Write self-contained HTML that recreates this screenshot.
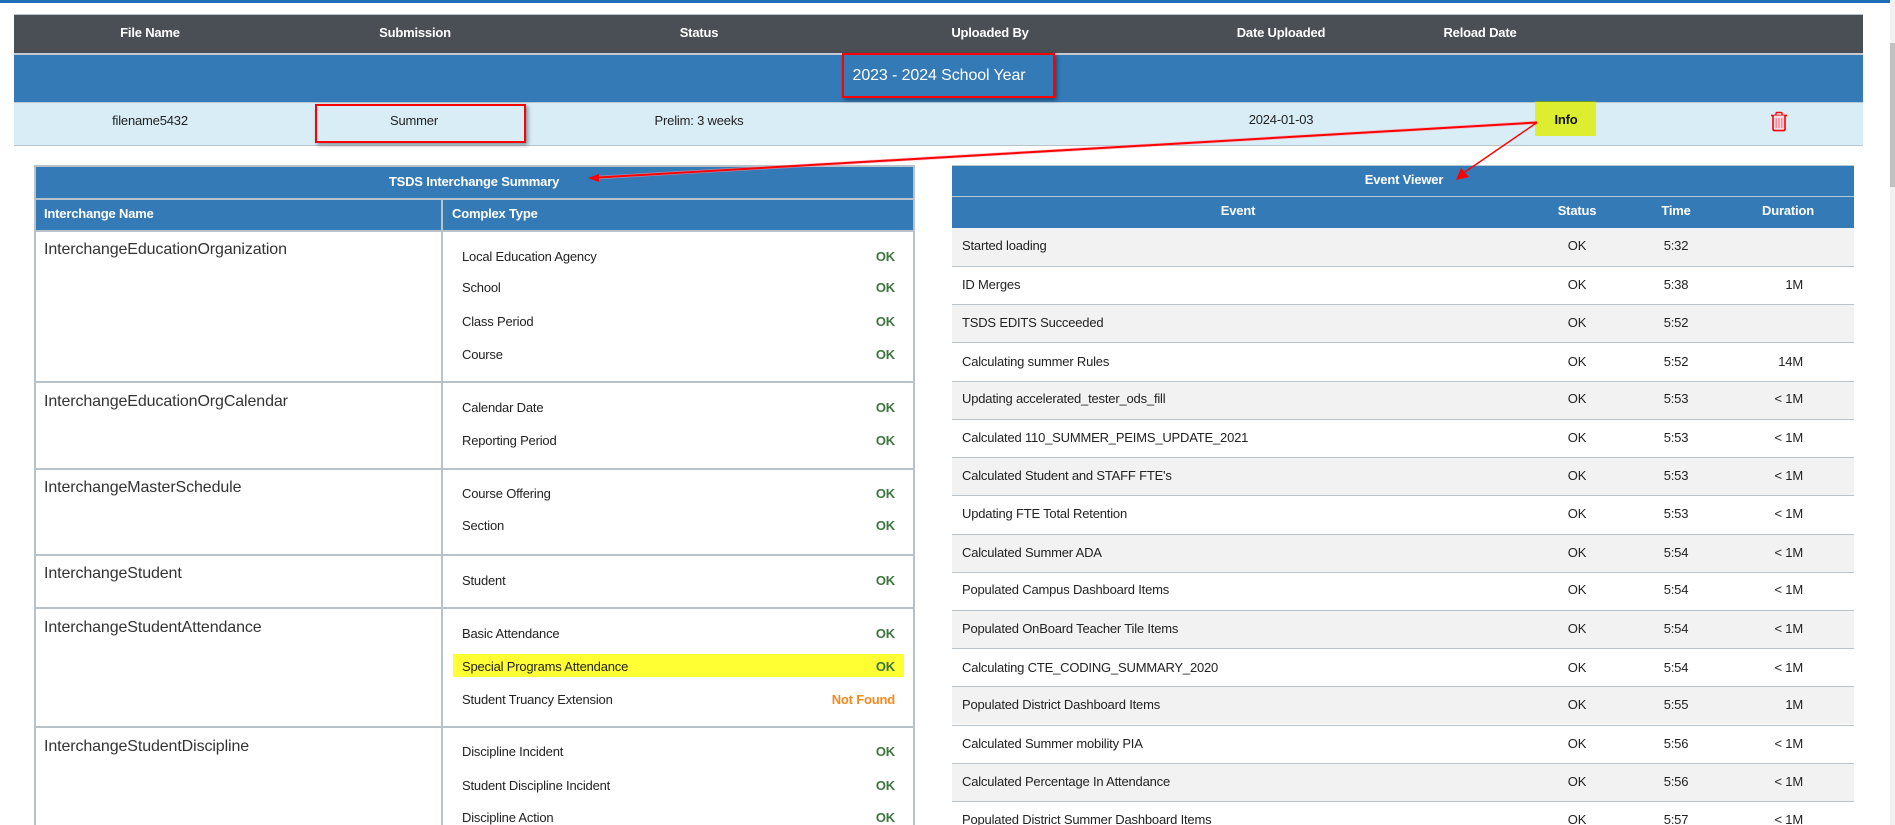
<!DOCTYPE html>
<html lang="en"><head><meta charset="utf-8"><title>TSDS Interchange Summary</title>
<style>
html,body{margin:0;padding:0;width:1895px;height:825px;overflow:hidden;background:#fff}
body{position:relative;font-family:"Liberation Sans",Arial,sans-serif;font-size:13px;color:#222;letter-spacing:-.19px}
.b{position:absolute;display:block}
.t{position:absolute;line-height:20px;height:20px;white-space:nowrap}
.c{position:absolute;line-height:20px;height:20px;width:300px;margin-left:-150px;text-align:center;white-space:nowrap}
.r{position:absolute;line-height:20px;height:20px;width:200px;margin-left:-200px;text-align:right;white-space:nowrap}
.w{color:#fff;font-weight:bold}
.n{font-size:16px;color:#333;letter-spacing:-.11px}
.ok{color:#3c763d;font-weight:bold}
.nf{color:#f58a1f;font-weight:bold}
.e{position:absolute;left:952px;width:902px;height:38px;border-top:1px solid #bac4cd;box-sizing:border-box}
.g{background:#f2f2f2}
.l{position:absolute;background:#b8c2cb}
</style></head><body>
<div class="b" style="left:0;top:0;width:1890px;height:3px;background:#1f6fb8"></div>
<div class="b" style="left:1890px;top:0;width:5px;height:825px;background:#f1f1f1"></div>
<div class="b" style="left:1890px;top:43px;width:5px;height:144px;background:#c1c1c1"></div>

<div class="b" style="left:14px;top:14px;width:1849px;height:39px;background:#4a4e55;border-top:1px solid #b8c2cb;box-sizing:border-box"></div>
<div class="b" style="left:14px;top:53px;width:1849px;height:2px;background:#c4cad0"></div>
<div class="b" style="left:14px;top:55px;width:1849px;height:47px;background:#337ab7"></div>
<div class="b" style="left:14px;top:102px;width:1849px;height:44px;background:#d9edf7;border-top:1px solid #b8c8d2;border-bottom:1px solid #b8c4cc;box-sizing:border-box"></div>

<div class="c w" style="left:150px;top:23px">File Name</div>
<div class="c w" style="left:415px;top:23px">Submission</div>
<div class="c w" style="left:699px;top:23px">Status</div>
<div class="c w" style="left:990px;top:23px">Uploaded By</div>
<div class="c w" style="left:1281px;top:23px">Date Uploaded</div>
<div class="c w" style="left:1480px;top:23px">Reload Date</div>

<div class="c" style="left:939px;top:66px;color:#fff;font-size:16px;letter-spacing:-.1px">2023 - 2024 School Year</div>
<div class="b" style="left:842px;top:53px;width:213px;height:45px;border:2px solid #f00;box-sizing:border-box;box-shadow:2px 2px 4px rgba(0,0,0,.4)"></div>

<div class="c" style="left:150px;top:111px">filename5432</div>
<div class="c" style="left:414px;top:111px">Summer</div>
<div class="c" style="left:699px;top:111px">Prelim: 3 weeks</div>
<div class="c" style="left:1281px;top:110px">2024-01-03</div>
<div class="b" style="left:315px;top:104px;width:211px;height:39px;border:2px solid #f00;box-sizing:border-box;box-shadow:2px 2px 4px rgba(0,0,0,.4)"></div>

<div class="b" style="left:1535px;top:101px;width:61px;height:35px;background:#dcee2f;border-top:1px solid #6f9a2a;box-sizing:border-box"></div>
<div class="c" style="left:1566px;top:110px;color:#111;font-weight:bold">Info</div>
<svg class="b" style="left:1770px;top:111px" width="18" height="21" viewBox="0 0 18 21"><path d="M1 4.5H17" stroke="#f00" stroke-width="1.6" fill="none"/><path d="M6 4.5V2.5Q6 1.5 7 1.5H11Q12 1.5 12 2.5V4.5" stroke="#f00" stroke-width="1.4" fill="none"/><path d="M3 4.5V18Q3 19.6 4.6 19.6H13.4Q15 19.6 15 18V4.5" stroke="#f00" stroke-width="1.6" fill="#f8dfe6"/><path d="M6.2 7V17M9 7V17M11.8 7V17" stroke="#f2889a" stroke-width="1.5"/></svg>

<!-- left table -->
<div class="b" style="left:34px;top:165px;width:881px;height:660px;border:2px solid #b8c2cb;border-bottom:0;box-sizing:border-box;background:#fff"></div>
<div class="b" style="left:36px;top:167px;width:877px;height:31px;background:#337ab7"></div>
<div class="b" style="left:36px;top:200px;width:405px;height:30px;background:#337ab7"></div>
<div class="b" style="left:443px;top:200px;width:470px;height:30px;background:#337ab7"></div>
<div class="l" style="left:441px;top:198px;width:2px;height:627px"></div>
<div class="l" style="left:36px;top:198px;width:877px;height:2px"></div>
<div class="l" style="left:36px;top:230px;width:877px;height:2px"></div>
<div class="l" style="left:36px;top:381px;width:877px;height:2px"></div>
<div class="l" style="left:36px;top:468px;width:877px;height:2px"></div>
<div class="l" style="left:36px;top:554px;width:877px;height:2px"></div>
<div class="l" style="left:36px;top:607px;width:877px;height:2px"></div>
<div class="l" style="left:36px;top:726px;width:877px;height:2px"></div>

<div class="c w" style="left:474px;top:172px">TSDS Interchange Summary</div>
<div class="t w" style="left:44px;top:204px">Interchange Name</div>
<div class="t w" style="left:452px;top:204px">Complex Type</div>

<div class="t n" style="left:44px;top:240px">InterchangeEducationOrganization</div>
<div class="t n" style="left:44px;top:392px">InterchangeEducationOrgCalendar</div>
<div class="t n" style="left:44px;top:478px">InterchangeMasterSchedule</div>
<div class="t n" style="left:44px;top:564px">InterchangeStudent</div>
<div class="t n" style="left:44px;top:618px">InterchangeStudentAttendance</div>
<div class="t n" style="left:44px;top:737px">InterchangeStudentDiscipline</div>

<div class="b" style="left:453px;top:654px;width:451px;height:23px;background:#ffff33"></div>

<div class="t" style="left:462px;top:247px">Local Education Agency</div><div class="r ok" style="left:895px;top:247px">OK</div>
<div class="t" style="left:462px;top:278px">School</div><div class="r ok" style="left:895px;top:278px">OK</div>
<div class="t" style="left:462px;top:312px">Class Period</div><div class="r ok" style="left:895px;top:312px">OK</div>
<div class="t" style="left:462px;top:345px">Course</div><div class="r ok" style="left:895px;top:345px">OK</div>
<div class="t" style="left:462px;top:398px">Calendar Date</div><div class="r ok" style="left:895px;top:398px">OK</div>
<div class="t" style="left:462px;top:431px">Reporting Period</div><div class="r ok" style="left:895px;top:431px">OK</div>
<div class="t" style="left:462px;top:484px">Course Offering</div><div class="r ok" style="left:895px;top:484px">OK</div>
<div class="t" style="left:462px;top:516px">Section</div><div class="r ok" style="left:895px;top:516px">OK</div>
<div class="t" style="left:462px;top:571px">Student</div><div class="r ok" style="left:895px;top:571px">OK</div>
<div class="t" style="left:462px;top:624px">Basic Attendance</div><div class="r ok" style="left:895px;top:624px">OK</div>
<div class="t" style="left:462px;top:657px">Special Programs Attendance</div><div class="r ok" style="left:895px;top:657px">OK</div>
<div class="t" style="left:462px;top:690px">Student Truancy Extension</div><div class="r nf" style="left:895px;top:690px">Not Found</div>
<div class="t" style="left:462px;top:742px">Discipline Incident</div><div class="r ok" style="left:895px;top:742px">OK</div>
<div class="t" style="left:462px;top:776px">Student Discipline Incident</div><div class="r ok" style="left:895px;top:776px">OK</div>
<div class="t" style="left:462px;top:808px">Discipline Action</div><div class="r ok" style="left:895px;top:808px">OK</div>

<!-- right table -->
<div class="b" style="left:952px;top:165px;width:902px;height:63px;background:#337ab7;border-top:1px solid #b8c8d6;box-sizing:border-box"></div>
<div class="b" style="left:952px;top:196px;width:902px;height:1px;background:#b8c8d6"></div>
<div class="c w" style="left:1404px;top:170px">Event Viewer</div>
<div class="c w" style="left:1238px;top:201px">Event</div>
<div class="c w" style="left:1577px;top:201px">Status</div>
<div class="c w" style="left:1676px;top:201px">Time</div>
<div class="c w" style="left:1788px;top:201px">Duration</div>

<div class="e g" style="top:228px;border-top:0"></div>
<div class="e" style="top:266px"></div>
<div class="e g" style="top:304px"></div>
<div class="e" style="top:342px"></div>
<div class="e g" style="top:381px"></div>
<div class="e" style="top:419px"></div>
<div class="e g" style="top:457px"></div>
<div class="e" style="top:495px"></div>
<div class="e g" style="top:534px"></div>
<div class="e" style="top:572px"></div>
<div class="e g" style="top:610px"></div>
<div class="e" style="top:648px"></div>
<div class="e g" style="top:686px"></div>
<div class="e" style="top:725px"></div>
<div class="e g" style="top:763px"></div>
<div class="e" style="top:801px"></div>

<div class="t" style="left:962px;top:236px">Started loading</div><div class="c" style="left:1577px;top:236px">OK</div><div class="c" style="left:1676px;top:236px">5:32</div>
<div class="t" style="left:962px;top:275px">ID Merges</div><div class="c" style="left:1577px;top:275px">OK</div><div class="c" style="left:1676px;top:275px">5:38</div><div class="r" style="left:1803px;top:275px">1M</div>
<div class="t" style="left:962px;top:313px">TSDS EDITS Succeeded</div><div class="c" style="left:1577px;top:313px">OK</div><div class="c" style="left:1676px;top:313px">5:52</div>
<div class="t" style="left:962px;top:352px">Calculating summer Rules</div><div class="c" style="left:1577px;top:352px">OK</div><div class="c" style="left:1676px;top:352px">5:52</div><div class="r" style="left:1803px;top:352px">14M</div>
<div class="t" style="left:962px;top:389px">Updating accelerated_tester_ods_fill</div><div class="c" style="left:1577px;top:389px">OK</div><div class="c" style="left:1676px;top:389px">5:53</div><div class="r" style="left:1803px;top:389px">&lt; 1M</div>
<div class="t" style="left:962px;top:428px">Calculated 110_SUMMER_PEIMS_UPDATE_2021</div><div class="c" style="left:1577px;top:428px">OK</div><div class="c" style="left:1676px;top:428px">5:53</div><div class="r" style="left:1803px;top:428px">&lt; 1M</div>
<div class="t" style="left:962px;top:466px">Calculated Student and STAFF FTE's</div><div class="c" style="left:1577px;top:466px">OK</div><div class="c" style="left:1676px;top:466px">5:53</div><div class="r" style="left:1803px;top:466px">&lt; 1M</div>
<div class="t" style="left:962px;top:504px">Updating FTE Total Retention</div><div class="c" style="left:1577px;top:504px">OK</div><div class="c" style="left:1676px;top:504px">5:53</div><div class="r" style="left:1803px;top:504px">&lt; 1M</div>
<div class="t" style="left:962px;top:543px">Calculated Summer ADA</div><div class="c" style="left:1577px;top:543px">OK</div><div class="c" style="left:1676px;top:543px">5:54</div><div class="r" style="left:1803px;top:543px">&lt; 1M</div>
<div class="t" style="left:962px;top:580px">Populated Campus Dashboard Items</div><div class="c" style="left:1577px;top:580px">OK</div><div class="c" style="left:1676px;top:580px">5:54</div><div class="r" style="left:1803px;top:580px">&lt; 1M</div>
<div class="t" style="left:962px;top:619px">Populated OnBoard Teacher Tile Items</div><div class="c" style="left:1577px;top:619px">OK</div><div class="c" style="left:1676px;top:619px">5:54</div><div class="r" style="left:1803px;top:619px">&lt; 1M</div>
<div class="t" style="left:962px;top:658px">Calculating CTE_CODING_SUMMARY_2020</div><div class="c" style="left:1577px;top:658px">OK</div><div class="c" style="left:1676px;top:658px">5:54</div><div class="r" style="left:1803px;top:658px">&lt; 1M</div>
<div class="t" style="left:962px;top:695px">Populated District Dashboard Items</div><div class="c" style="left:1577px;top:695px">OK</div><div class="c" style="left:1676px;top:695px">5:55</div><div class="r" style="left:1803px;top:695px">1M</div>
<div class="t" style="left:962px;top:734px">Calculated Summer mobility PIA</div><div class="c" style="left:1577px;top:734px">OK</div><div class="c" style="left:1676px;top:734px">5:56</div><div class="r" style="left:1803px;top:734px">&lt; 1M</div>
<div class="t" style="left:962px;top:772px">Calculated Percentage In Attendance</div><div class="c" style="left:1577px;top:772px">OK</div><div class="c" style="left:1676px;top:772px">5:56</div><div class="r" style="left:1803px;top:772px">&lt; 1M</div>
<div class="t" style="left:962px;top:810px">Populated District Summer Dashboard Items</div><div class="c" style="left:1577px;top:810px">OK</div><div class="c" style="left:1676px;top:810px">5:57</div><div class="r" style="left:1803px;top:810px">&lt; 1M</div>

<!-- arrows -->
<svg class="b" style="left:0;top:0" width="1895" height="825" viewBox="0 0 1895 825">
<path d="M1537 122.5L598 177.5" stroke="#f4a0a8" stroke-width="3.4" fill="none" opacity=".6"/>
<path d="M1537 122.5L598 177.5" stroke="#f00" stroke-width="2" fill="none"/>
<path d="M588 178L599 174V182Z" fill="#f00"/>
<path d="M1537 122.5L1462 174" stroke="#f00" stroke-width="1.4" fill="none"/>
<path d="M1456 180L1461 168L1469 177Z" fill="#f00"/>
</svg>
</body></html>
